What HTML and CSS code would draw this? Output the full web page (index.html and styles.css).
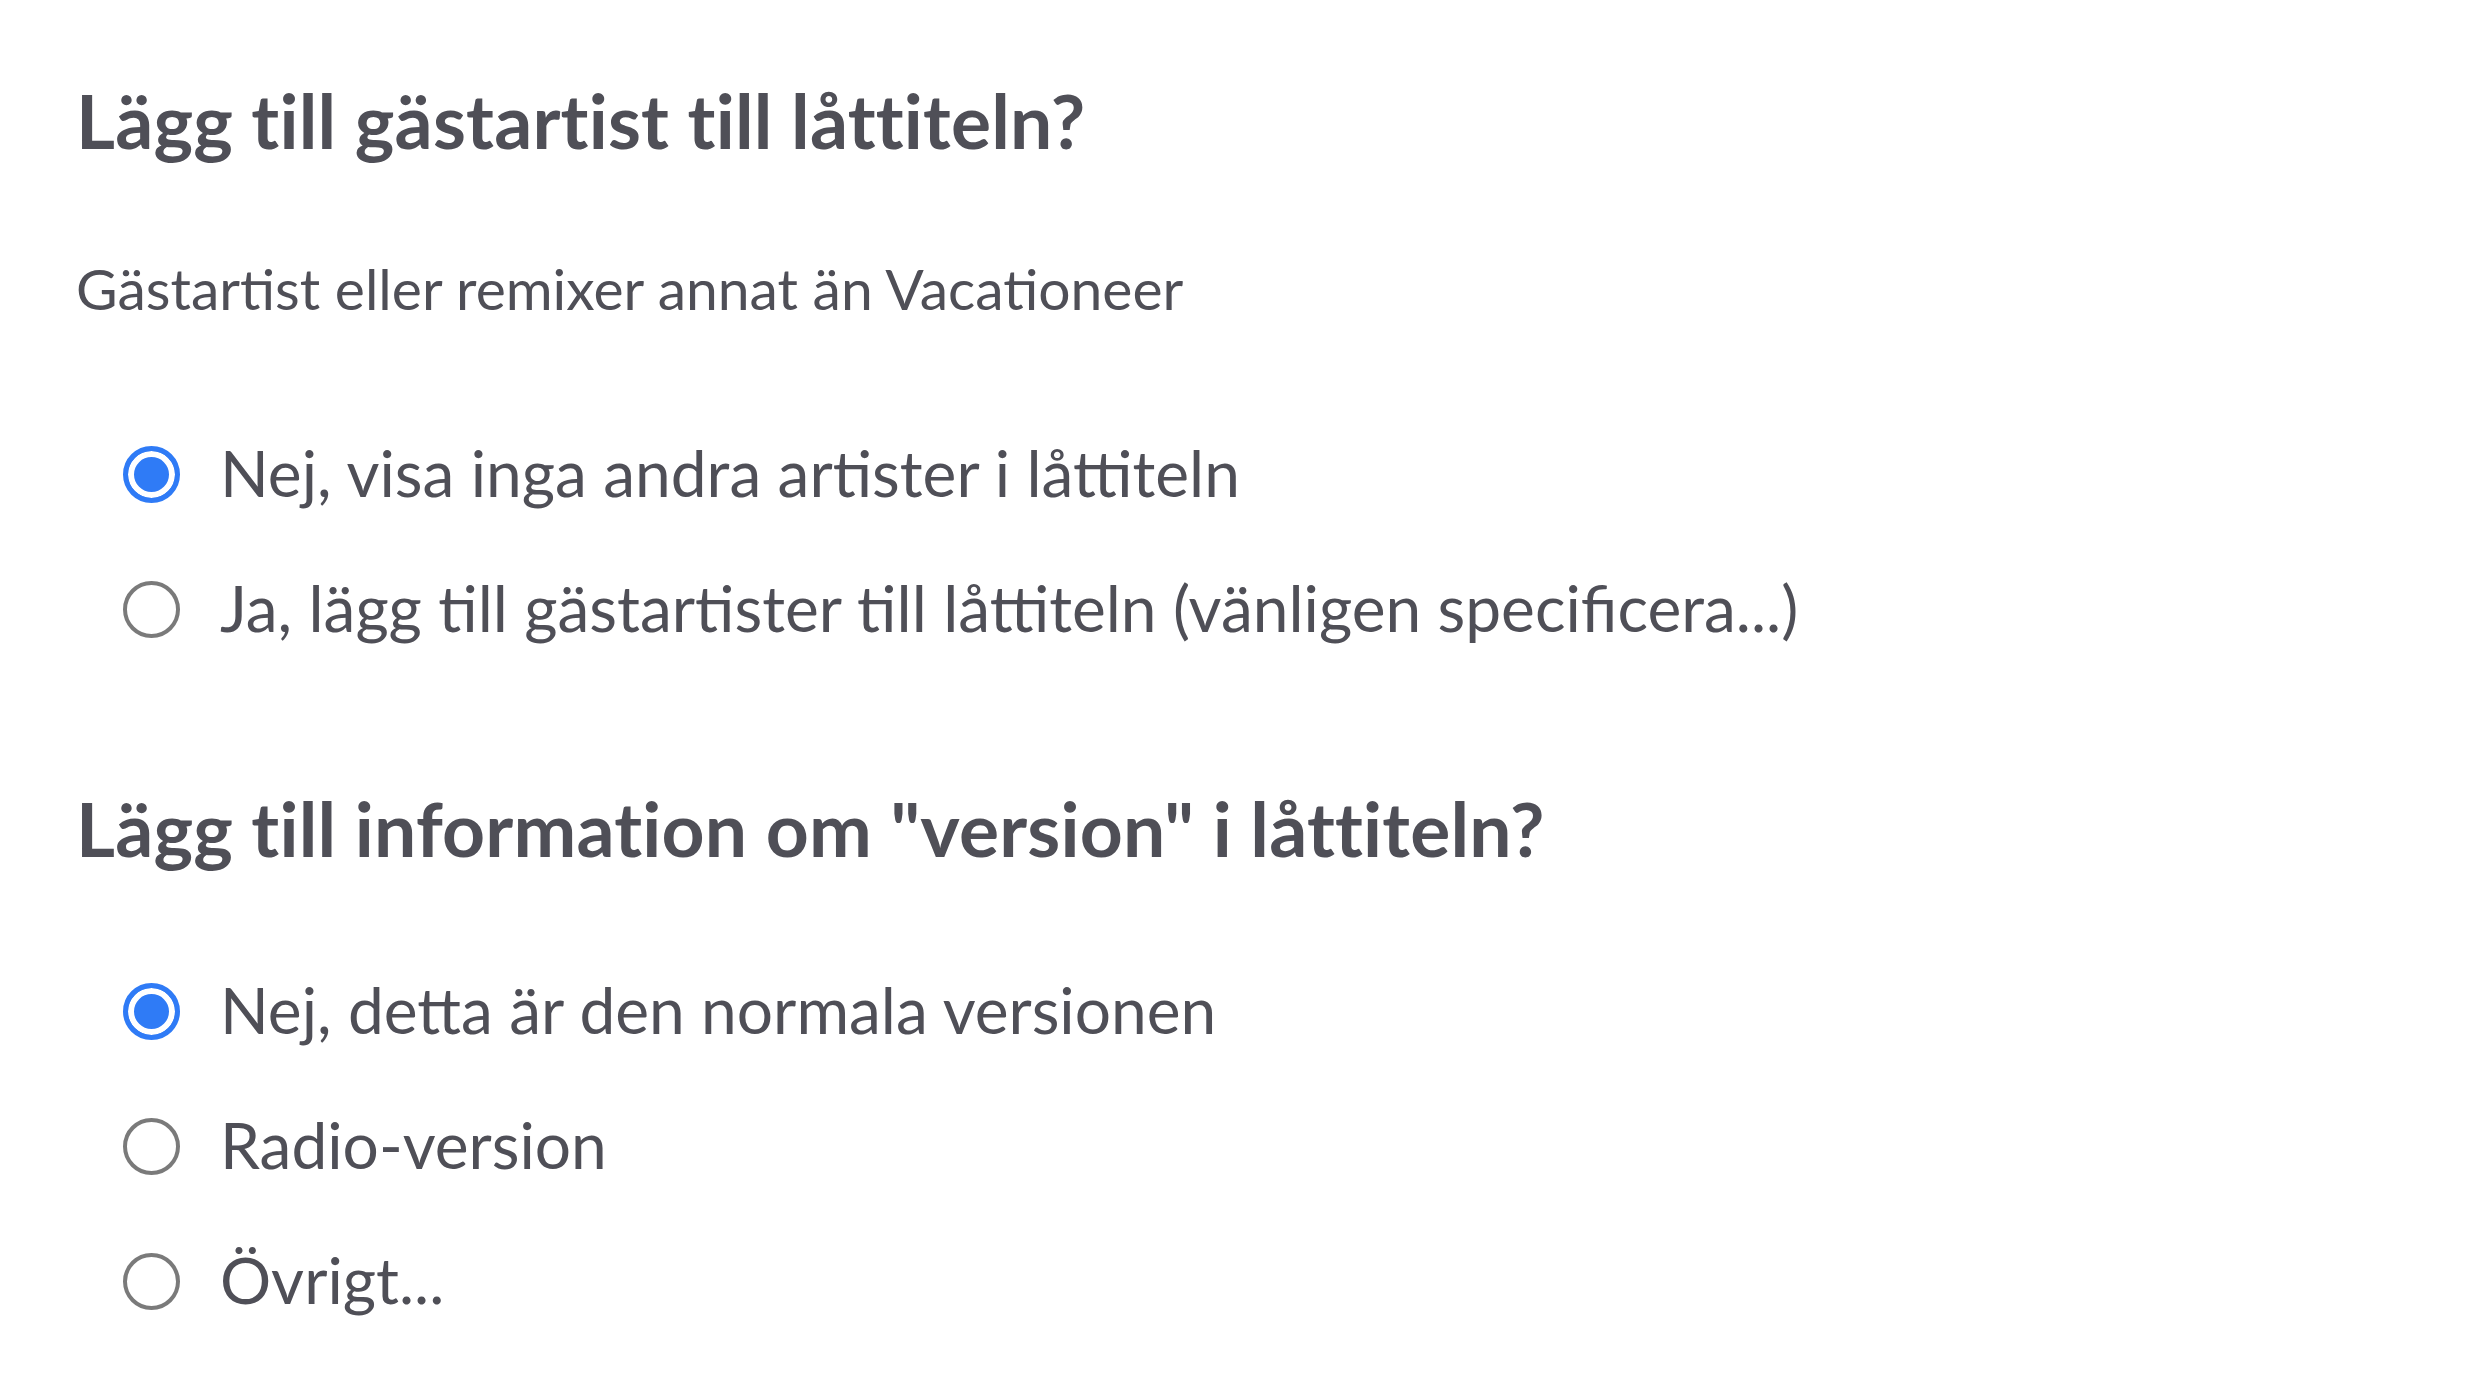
FILE: index.html
```html
<!DOCTYPE html>
<html lang="sv">
<head>
    <meta charset="UTF-8">
    <meta name="viewport" content="width=device-width, initial-scale=1.0">
    <link rel="stylesheet" href="styles.css">
    <title>Låttitel</title>
</head>
<body>
    <form class="form">
        <h2 class="fraga">Lägg till gästartist till låttiteln?</h2>
        <p class="hjalp">Gästartist eller remixer annat än Vacationeer</p>
        <div class="val val-forsta">
            <label class="rad"><input type="radio" name="gast" value="nej" checked><span>Nej, visa inga andra artister i låttiteln</span></label>
            <label class="rad"><input type="radio" name="gast" value="ja"><span>Ja, lägg till gästartister till låttiteln (vänligen specificera...)</span></label>
        </div>

        <h2 class="fraga fraga-andra">Lägg till information om "version" i låttiteln?</h2>
        <div class="val">
            <label class="rad"><input type="radio" name="version" value="normal" checked><span>Nej, detta är den normala versionen</span></label>
            <label class="rad"><input type="radio" name="version" value="radio"><span>Radio-version</span></label>
            <label class="rad"><input type="radio" name="version" value="ovrigt"><span>Övrigt...</span></label>
        </div>
    </form>
</body>
</html>
```

FILE: styles.css
```css
*
{
    box-sizing: border-box;
}
body{margin:0;background:#fff;color:#4f4f57;font-family:Lato,'Open Sans',sans-serif;}
.form{padding:77px 0 40px 76px;}
.fraga{margin:0;font-size:75px;line-height:86px;font-weight:700;letter-spacing:0.2px;}
.fraga-andra{margin-top:110px;}
.hjalp{margin:96px 0 0;font-size:57px;line-height:58px;}
.val{display:flex;flex-direction:column;margin:71px 0 0 47px;}
.val-forsta{margin-top:88px;}
.rad{display:flex;align-items:center;height:135px;font-size:64px;line-height:135px;cursor:pointer;}
.rad input{appearance:none;-webkit-appearance:none;margin:4px 40px 0 0;width:57px;height:57px;flex:none;border:4px solid #7a7a7a;border-radius:50%;background:#fff;}
.rad input:checked{border:5px solid #2f7bf6;background:#2f7bf6;box-shadow:inset 0 0 0 6px #fff;}
```
